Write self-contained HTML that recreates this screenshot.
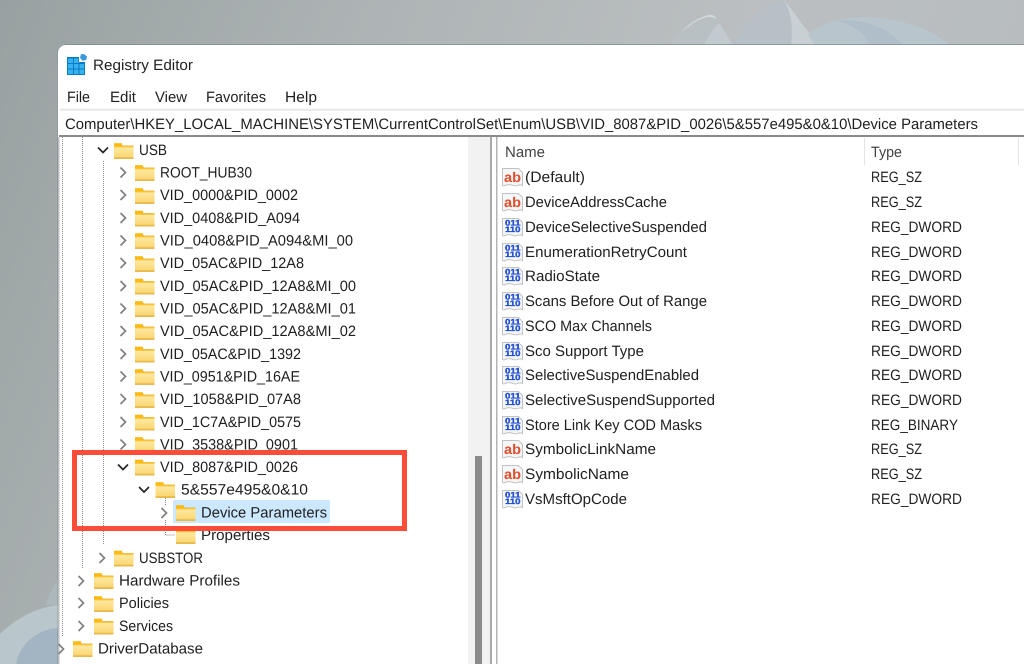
<!DOCTYPE html>
<html><head><meta charset="utf-8"><style>
html,body{margin:0;padding:0;width:1024px;height:664px;overflow:hidden;background:#a5acac}
svg{display:block;filter:blur(.3px)}
text{font-family:"Liberation Sans",sans-serif;font-size:15px;fill:#1f1f1f;text-rendering:geometricPrecision}
text.ab{font-size:14px;font-weight:700;fill:#de4f2b}
text.b{font-size:8px;font-weight:700;fill:#2350cf;stroke:#2350cf;stroke-width:.35px}
</style></head><body>
<svg width="1024" height="664" viewBox="0 0 1024 664" xmlns="http://www.w3.org/2000/svg">
<defs>
<linearGradient id="bg" x1="0" y1="0" x2="1" y2="0.25"><stop offset="0" stop-color="#98a1a1"/><stop offset=".35" stop-color="#aeb4b5"/><stop offset=".7" stop-color="#bbbfc1"/><stop offset="1" stop-color="#b7bcbe"/></linearGradient>
<linearGradient id="fb" x1="0" y1="0" x2="0" y2="1"><stop offset="0" stop-color="#fdeaa6"/><stop offset="1" stop-color="#fbd56f"/></linearGradient>
<g id="f"><path d="M0 -6.5h7l2 2h10.500v13.500h-19.500z" fill="#e9b949"/><rect x="0" y="-6.800" width="8" height="3.500" fill="#fdb913"/><rect x="0" y="-3.500" width="19.500" height="11.500" fill="url(#fb)"/><rect x="0" y="-3.800" width="19.500" height="1.200" fill="#fcc433"/><path d="M0 7.600h19.500" stroke="#e8b94f" stroke-width=".8"/></g>
<path id="cr" d="M-3.500 -5l5 5-5 5" fill="none" stroke="#808080" stroke-width="1.700"/>
<path id="cd" d="M-5 -2.500l5 5 5-5" fill="none" stroke="#262626" stroke-width="1.700"/>
<path id="p" d="M-10 -8.500h16l4 4v13c-3-2-5 1-8 .3s-5-2-8-.8-3 1.200-4 .5z" fill="#f5f6f8" stroke="#c0c3c6" stroke-width="1"/>
</defs>

<!-- wallpaper -->
<rect width="1024" height="664" fill="url(#bg)"/>
<path d="M668 45C680 28 696 16 710 15c7 1 8 7 6 12-2 6-8 12-12 18z" fill="#b8c0c4"/>
<path d="M680 33c9-9 20-17 30-18 4 0 6 2 6 4-2-2-5-2-8-2-9 1-19 9-28 16z" fill="#d5dadb"/>
<path d="M704 45c4-8 10-18 15-22 6 8 10 16 14 22z" fill="#c1cace"/>
<path d="M733 45C745 26 760 6 778 1c6-1 10 1 12 6 3 9 2 22 1 38z" fill="#b6c0c6"/>
<path d="M784 1c8 6 18 26 36 44h-29c2-14 1-32-7-44z" fill="#c8d0d4"/>
<path d="M808 35c10-10 30-18 58-18 28 0 64 10 84 28H815z" fill="#b9c5cd"/>
<path d="M870 45c-4-10-18-22-34-24 30-4 56 10 66 24z" fill="#b0bec9"/>
<path d="M0 634c14-14 34-26 58-29v59H0z" fill="#b9c6cc"/>
<path d="M16 664c3-18 20-35 42-36v36z" fill="#a3b5c3"/>
<path d="M46 605c3-9 7-18 12-25v25z" fill="#adb8bc"/>
<rect x="64" y="44" width="960" height="1" fill="#7c878c" opacity=".7"/>
<rect x="57" y="50" width="1" height="614" fill="#7c878c" opacity=".35"/>

<!-- window -->
<path d="M66 45H1024V664H58V53a8 8 0 0 1 8-8z" fill="#fff"/>
<rect x="58" y="137" width="1.500" height="527" fill="#bdbdbd"/>
<rect x="60" y="108.500" width="964" height="2.500" fill="#ececec"/>
<rect x="59" y="135" width="965" height="2" fill="#8a8a8a"/>

<!-- registry icon -->
<g>
<rect x="67" y="57" width="18" height="18" fill="#0c78c8"/>
<rect x="79" y="55" width="8" height="7" fill="#fff"/>
<g fill="#35b4ee"><rect x="68" y="58.500" width="5" height="4.500"/><rect x="74" y="58.500" width="4.500" height="4.500"/><rect x="68" y="64" width="5" height="4.500"/><rect x="74" y="64" width="4.500" height="4.500"/><rect x="79.500" y="64" width="4.500" height="4.500"/><rect x="68" y="69.500" width="5" height="4.500"/><rect x="74" y="69.500" width="4.500" height="4.500"/><rect x="79.500" y="69.500" width="4.500" height="4.500"/></g>
<path d="M84 54l3 2.500-.8 3.500-3.700.8-2.500-3 1-3.500z" fill="#3c98d8"/>
</g>
<text x="93" y="70" textLength="100" lengthAdjust="spacingAndGlyphs">Registry Editor</text>

<!-- menu -->
<text x="67" y="102" textLength="23" lengthAdjust="spacingAndGlyphs">File</text>
<text x="110" y="102" textLength="26" lengthAdjust="spacingAndGlyphs">Edit</text>
<text x="155" y="102" textLength="32" lengthAdjust="spacingAndGlyphs">View</text>
<text x="206" y="102" textLength="60" lengthAdjust="spacingAndGlyphs">Favorites</text>
<text x="285" y="102" textLength="32" lengthAdjust="spacingAndGlyphs">Help</text>

<!-- address -->
<text x="65" y="129" textLength="913" lengthAdjust="spacingAndGlyphs">Computer\HKEY_LOCAL_MACHINE\SYSTEM\CurrentControlSet\Enum\USB\VID_8087&amp;PID_0026\5&amp;557e495&amp;0&amp;10\Device Parameters</text>

<!-- tree dotted lines -->
<g stroke="#8a8a8a" stroke-width="1" stroke-dasharray="1 1" fill="none">
<path d="M62.500 137V636"/>
<path d="M82.500 137V568"/>
<path d="M103.500 161V545"/>
<path d="M165.500 498V505M165.500 520V535H175"/>
</g>

<!-- selection -->
<rect x="173" y="500" width="157" height="23" rx="1" fill="#cce8ff"/>

<!-- tree -->
<use href="#cd" x="103" y="150"/><use href="#f" x="114" y="150"/><text x="139" y="155" textLength="28" lengthAdjust="spacingAndGlyphs">USB</text>
<use href="#cr" x="124" y="172.500"/><use href="#f" x="135" y="172"/><text x="160" y="177.500" textLength="92" lengthAdjust="spacingAndGlyphs">ROOT_HUB30</text>
<use href="#cr" x="124" y="195"/><use href="#f" x="135" y="195"/><text x="160" y="200" textLength="138" lengthAdjust="spacingAndGlyphs">VID_0000&amp;PID_0002</text>
<use href="#cr" x="124" y="218"/><use href="#f" x="135" y="217.500"/><text x="160" y="223" textLength="140" lengthAdjust="spacingAndGlyphs">VID_0408&amp;PID_A094</text>
<use href="#cr" x="124" y="240.500"/><use href="#f" x="135" y="240"/><text x="160" y="245.500" textLength="193" lengthAdjust="spacingAndGlyphs">VID_0408&amp;PID_A094&amp;MI_00</text>
<use href="#cr" x="124" y="263"/><use href="#f" x="135" y="263"/><text x="160" y="268" textLength="144" lengthAdjust="spacingAndGlyphs">VID_05AC&amp;PID_12A8</text>
<use href="#cr" x="124" y="286"/><use href="#f" x="135" y="285.500"/><text x="160" y="291" textLength="196" lengthAdjust="spacingAndGlyphs">VID_05AC&amp;PID_12A8&amp;MI_00</text>
<use href="#cr" x="124" y="308.500"/><use href="#f" x="135" y="308"/><text x="160" y="313.500" textLength="196" lengthAdjust="spacingAndGlyphs">VID_05AC&amp;PID_12A8&amp;MI_01</text>
<use href="#cr" x="124" y="331"/><use href="#f" x="135" y="331"/><text x="160" y="336" textLength="196" lengthAdjust="spacingAndGlyphs">VID_05AC&amp;PID_12A8&amp;MI_02</text>
<use href="#cr" x="124" y="354"/><use href="#f" x="135" y="353.500"/><text x="160" y="359" textLength="141" lengthAdjust="spacingAndGlyphs">VID_05AC&amp;PID_1392</text>
<use href="#cr" x="124" y="376.500"/><use href="#f" x="135" y="376"/><text x="160" y="381.500" textLength="140" lengthAdjust="spacingAndGlyphs">VID_0951&amp;PID_16AE</text>
<use href="#cr" x="124" y="399"/><use href="#f" x="135" y="399"/><text x="160" y="404" textLength="141" lengthAdjust="spacingAndGlyphs">VID_1058&amp;PID_07A8</text>
<use href="#cr" x="124" y="422"/><use href="#f" x="135" y="421.500"/><text x="160" y="427" textLength="141" lengthAdjust="spacingAndGlyphs">VID_1C7A&amp;PID_0575</text>
<use href="#cr" x="124" y="444.500"/><use href="#f" x="135" y="444"/><text x="160" y="449.500" textLength="138" lengthAdjust="spacingAndGlyphs">VID_3538&amp;PID_0901</text>
<use href="#cd" x="123" y="467"/><use href="#f" x="135" y="466.500"/><text x="160" y="472" textLength="138" lengthAdjust="spacingAndGlyphs">VID_8087&amp;PID_0026</text>
<use href="#cd" x="144" y="489.500"/><use href="#f" x="155.500" y="489"/><text x="181" y="494.500" textLength="127" lengthAdjust="spacingAndGlyphs">5&amp;557e495&amp;0&amp;10</text>
<use href="#cr" x="165" y="513"/><use href="#f" x="176" y="512"/><text x="201" y="517.500" textLength="126" lengthAdjust="spacingAndGlyphs">Device Parameters</text>
<use href="#f" x="176" y="535"/><text x="201" y="540" textLength="69" lengthAdjust="spacingAndGlyphs">Properties</text>
<use href="#cr" x="103" y="558"/><use href="#f" x="114" y="557.500"/><text x="139" y="563" textLength="64" lengthAdjust="spacingAndGlyphs">USBSTOR</text>
<use href="#cr" x="82" y="581"/><use href="#f" x="94" y="580"/><text x="119" y="585.500" textLength="121" lengthAdjust="spacingAndGlyphs">Hardware Profiles</text>
<use href="#cr" x="82" y="603"/><use href="#f" x="94" y="603"/><text x="119" y="608" textLength="50" lengthAdjust="spacingAndGlyphs">Policies</text>
<use href="#cr" x="82" y="626"/><use href="#f" x="94" y="625.500"/><text x="119" y="631" textLength="54" lengthAdjust="spacingAndGlyphs">Services</text>
<use href="#cr" x="62" y="649"/><use href="#f" x="73" y="648"/><text x="98" y="653.500" textLength="105" lengthAdjust="spacingAndGlyphs">DriverDatabase</text>

<!-- red box -->
<rect x="74.500" y="452.500" width="330" height="76" fill="none" stroke="#fb4c39" stroke-width="5"/>

<!-- scrollbar + splitter -->
<rect x="468" y="137" width="22" height="527" fill="#f2f2f2"/>
<rect x="475" y="456" width="7" height="208" fill="#8c8c8c"/>
<rect x="490" y="137" width="2" height="527" fill="#a8a8a8"/>
<rect x="496" y="137" width="1.500" height="527" fill="#b4b4b4"/>

<!-- list header -->
<text x="505" y="157" textLength="40" lengthAdjust="spacingAndGlyphs" style="fill:#444">Name</text>
<text x="871" y="157" textLength="31" lengthAdjust="spacingAndGlyphs" style="fill:#444">Type</text>
<rect x="864" y="138" width="1" height="27" fill="#e3e3e3"/>
<rect x="1018" y="138" width="1" height="27" fill="#e3e3e3"/>

<!-- list icons -->
<use href="#p" x="512.500" y="177"/><text class="ab" x="504" y="182" textLength="17" lengthAdjust="spacingAndGlyphs">ab</text>
<use href="#p" x="512.500" y="202"/><text class="ab" x="504" y="207" textLength="17" lengthAdjust="spacingAndGlyphs">ab</text>
<use href="#p" x="512.500" y="449"/><text class="ab" x="504" y="454" textLength="17" lengthAdjust="spacingAndGlyphs">ab</text>
<use href="#p" x="512.500" y="474"/><text class="ab" x="504" y="479" textLength="17" lengthAdjust="spacingAndGlyphs">ab</text>

<use href="#p" x="512.500" y="227"/><text class="b" x="505" y="225.500" textLength="15.500" lengthAdjust="spacingAndGlyphs">011</text><text class="b" x="505" y="232" textLength="15.500" lengthAdjust="spacingAndGlyphs">110</text>
<use href="#p" x="512.500" y="252"/><text class="b" x="505" y="250.500" textLength="15.500" lengthAdjust="spacingAndGlyphs">011</text><text class="b" x="505" y="257" textLength="15.500" lengthAdjust="spacingAndGlyphs">110</text>
<use href="#p" x="512.500" y="276"/><text class="b" x="505" y="274.500" textLength="15.500" lengthAdjust="spacingAndGlyphs">011</text><text class="b" x="505" y="281" textLength="15.500" lengthAdjust="spacingAndGlyphs">110</text>
<use href="#p" x="512.500" y="301"/><text class="b" x="505" y="299.500" textLength="15.500" lengthAdjust="spacingAndGlyphs">011</text><text class="b" x="505" y="306" textLength="15.500" lengthAdjust="spacingAndGlyphs">110</text>
<use href="#p" x="512.500" y="326"/><text class="b" x="505" y="324.500" textLength="15.500" lengthAdjust="spacingAndGlyphs">011</text><text class="b" x="505" y="331" textLength="15.500" lengthAdjust="spacingAndGlyphs">110</text>
<use href="#p" x="512.500" y="351"/><text class="b" x="505" y="349.500" textLength="15.500" lengthAdjust="spacingAndGlyphs">011</text><text class="b" x="505" y="356" textLength="15.500" lengthAdjust="spacingAndGlyphs">110</text>
<use href="#p" x="512.500" y="375"/><text class="b" x="505" y="373.500" textLength="15.500" lengthAdjust="spacingAndGlyphs">011</text><text class="b" x="505" y="380" textLength="15.500" lengthAdjust="spacingAndGlyphs">110</text>
<use href="#p" x="512.500" y="400"/><text class="b" x="505" y="398.500" textLength="15.500" lengthAdjust="spacingAndGlyphs">011</text><text class="b" x="505" y="405" textLength="15.500" lengthAdjust="spacingAndGlyphs">110</text>
<use href="#p" x="512.500" y="425"/><text class="b" x="505" y="423.500" textLength="15.500" lengthAdjust="spacingAndGlyphs">011</text><text class="b" x="505" y="430" textLength="15.500" lengthAdjust="spacingAndGlyphs">110</text>
<use href="#p" x="512.500" y="499"/><text class="b" x="505" y="497.500" textLength="15.500" lengthAdjust="spacingAndGlyphs">011</text><text class="b" x="505" y="504" textLength="15.500" lengthAdjust="spacingAndGlyphs">110</text>

<text x="525" y="182" textLength="60" lengthAdjust="spacingAndGlyphs">(Default)</text><text x="871" y="182" textLength="51" lengthAdjust="spacingAndGlyphs">REG_SZ</text>
<text x="525" y="207" textLength="142" lengthAdjust="spacingAndGlyphs">DeviceAddressCache</text><text x="871" y="207" textLength="51" lengthAdjust="spacingAndGlyphs">REG_SZ</text>
<text x="525" y="232" textLength="182" lengthAdjust="spacingAndGlyphs">DeviceSelectiveSuspended</text><text x="871" y="232" textLength="91" lengthAdjust="spacingAndGlyphs">REG_DWORD</text>
<text x="525" y="257" textLength="162" lengthAdjust="spacingAndGlyphs">EnumerationRetryCount</text><text x="871" y="257" textLength="91" lengthAdjust="spacingAndGlyphs">REG_DWORD</text>
<text x="525" y="281" textLength="75" lengthAdjust="spacingAndGlyphs">RadioState</text><text x="871" y="281" textLength="91" lengthAdjust="spacingAndGlyphs">REG_DWORD</text>
<text x="525" y="306" textLength="182" lengthAdjust="spacingAndGlyphs">Scans Before Out of Range</text><text x="871" y="306" textLength="91" lengthAdjust="spacingAndGlyphs">REG_DWORD</text>
<text x="525" y="331" textLength="127" lengthAdjust="spacingAndGlyphs">SCO Max Channels</text><text x="871" y="331" textLength="91" lengthAdjust="spacingAndGlyphs">REG_DWORD</text>
<text x="525" y="356" textLength="119" lengthAdjust="spacingAndGlyphs">Sco Support Type</text><text x="871" y="356" textLength="91" lengthAdjust="spacingAndGlyphs">REG_DWORD</text>
<text x="525" y="380" textLength="174" lengthAdjust="spacingAndGlyphs">SelectiveSuspendEnabled</text><text x="871" y="380" textLength="91" lengthAdjust="spacingAndGlyphs">REG_DWORD</text>
<text x="525" y="405" textLength="190" lengthAdjust="spacingAndGlyphs">SelectiveSuspendSupported</text><text x="871" y="405" textLength="91" lengthAdjust="spacingAndGlyphs">REG_DWORD</text>
<text x="525" y="430" textLength="177" lengthAdjust="spacingAndGlyphs">Store Link Key COD Masks</text><text x="871" y="430" textLength="87" lengthAdjust="spacingAndGlyphs">REG_BINARY</text>
<text x="525" y="454" textLength="131" lengthAdjust="spacingAndGlyphs">SymbolicLinkName</text><text x="871" y="454" textLength="51" lengthAdjust="spacingAndGlyphs">REG_SZ</text>
<text x="525" y="479" textLength="104" lengthAdjust="spacingAndGlyphs">SymbolicName</text><text x="871" y="479" textLength="51" lengthAdjust="spacingAndGlyphs">REG_SZ</text>
<text x="525" y="504" textLength="102" lengthAdjust="spacingAndGlyphs">VsMsftOpCode</text><text x="871" y="504" textLength="91" lengthAdjust="spacingAndGlyphs">REG_DWORD</text>
</svg>
</body></html>
